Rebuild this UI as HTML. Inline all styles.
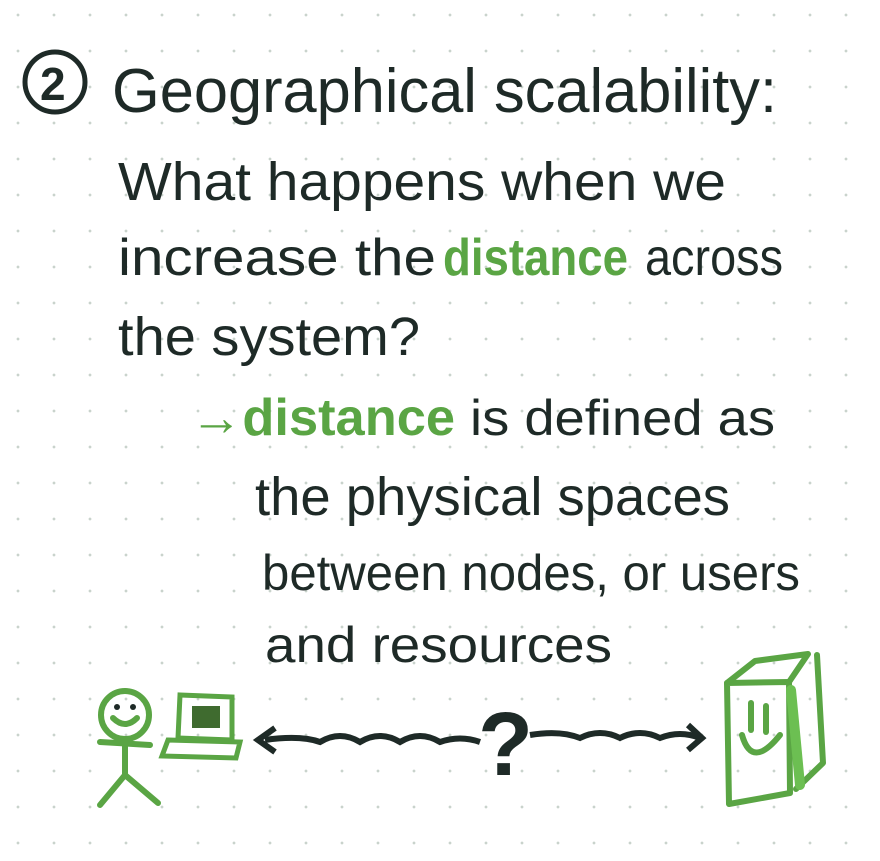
<!DOCTYPE html>
<html><head><style>
html,body{margin:0;padding:0;background:#fff}
body{width:880px;height:861px;overflow:hidden;
background-image:radial-gradient(circle,#c9d3cc 1.2px,transparent 1.6px);
background-size:36px 36px;background-position:0px -3px}
svg{position:absolute;left:0;top:0}
text{font-family:"Liberation Sans",sans-serif;fill:#1e2a27}
.g{fill:#5aa544}
</style></head><body>
<svg width="880" height="861" viewBox="0 0 880 861">
<circle cx="55" cy="82" r="30" fill="none" stroke="#1e2a27" stroke-width="5"/>
<text x="40" y="100" font-size="46" font-weight="bold">2</text>
<text x="112" y="112" font-size="62" textLength="665" lengthAdjust="spacingAndGlyphs">Geographical scalability:</text>
<text x="118" y="200" font-size="54" textLength="608" lengthAdjust="spacingAndGlyphs">What happens when we</text>
<text x="118" y="275" font-size="52" textLength="318" lengthAdjust="spacingAndGlyphs">increase the</text>
<text x="443" y="275" font-size="52" class="g" font-weight="bold" textLength="185" lengthAdjust="spacingAndGlyphs">distance</text>
<text x="645" y="275" font-size="52" textLength="138" lengthAdjust="spacingAndGlyphs">across</text>
<text x="118" y="355" font-size="54" textLength="302" lengthAdjust="spacingAndGlyphs">the system?</text>
<text x="190" y="435" font-size="52" class="g" font-weight="bold" textLength="265" lengthAdjust="spacingAndGlyphs">→distance</text>
<text x="470" y="435" font-size="50" textLength="305" lengthAdjust="spacingAndGlyphs">is defined as</text>
<text x="255" y="515" font-size="54" textLength="475" lengthAdjust="spacingAndGlyphs">the physical spaces</text>
<text x="262" y="590" font-size="50" textLength="538" lengthAdjust="spacingAndGlyphs">between nodes, or users</text>
<text x="265" y="662" font-size="50" textLength="347" lengthAdjust="spacingAndGlyphs">and resources</text>
<g stroke="#5aa544" stroke-width="6" fill="none" stroke-linecap="round">
<circle cx="125" cy="715" r="24"/>
<line x1="125" y1="740" x2="125" y2="775"/>
<line x1="100" y1="742" x2="150" y2="745"/>
<line x1="125" y1="775" x2="100" y2="805"/>
<line x1="125" y1="775" x2="158" y2="803"/>
<path d="M113 718 Q125 730 137 718"/>
</g>
<circle cx="117" cy="707" r="3" fill="#1e2a27"/><circle cx="133" cy="707" r="3" fill="#1e2a27"/>
<polygon points="180,695 232,697 232,740 178,738" fill="none" stroke="#5aa544" stroke-width="5"/>
<rect x="192" y="706" width="28" height="22" fill="#3f6b2f"/>
<polygon points="168,740 240,742 236,758 162,756" fill="none" stroke="#5aa544" stroke-width="5"/>
<path d="M265 740 Q300 735 320 742 Q340 730 360 742 Q380 730 400 742 Q420 730 440 742 Q460 735 480 742" fill="none" stroke="#1e2a27" stroke-width="6"/>
<path d="M275 728 L258 740 L275 752" fill="none" stroke="#1e2a27" stroke-width="6"/>
<path d="M530 735 Q560 730 580 738 Q600 728 620 738 Q640 728 660 738 Q680 730 700 738" fill="none" stroke="#1e2a27" stroke-width="6"/>
<path d="M688 725 L702 738 L688 750" fill="none" stroke="#1e2a27" stroke-width="6"/>
<text x="478" y="775" font-size="90" font-weight="bold">?</text>
<g stroke="#5aa544" stroke-width="6" fill="none" stroke-linecap="round" stroke-linejoin="round">
<polygon points="727,683 789,682 790,793 729,804"/>
<path d="M727,683 L755,661 L808,654 L789,682"/>
<path d="M817,655 L823,763 L796,789"/>
<path d="M791,690 L800,785" stroke-width="10" stroke="#6cbf52"/>
<line x1="751" y1="703" x2="751" y2="730"/>
<line x1="766" y1="706" x2="766" y2="732"/>
<path d="M742 735 Q752 770 780 735"/>
</g>
</svg>
</body></html>
